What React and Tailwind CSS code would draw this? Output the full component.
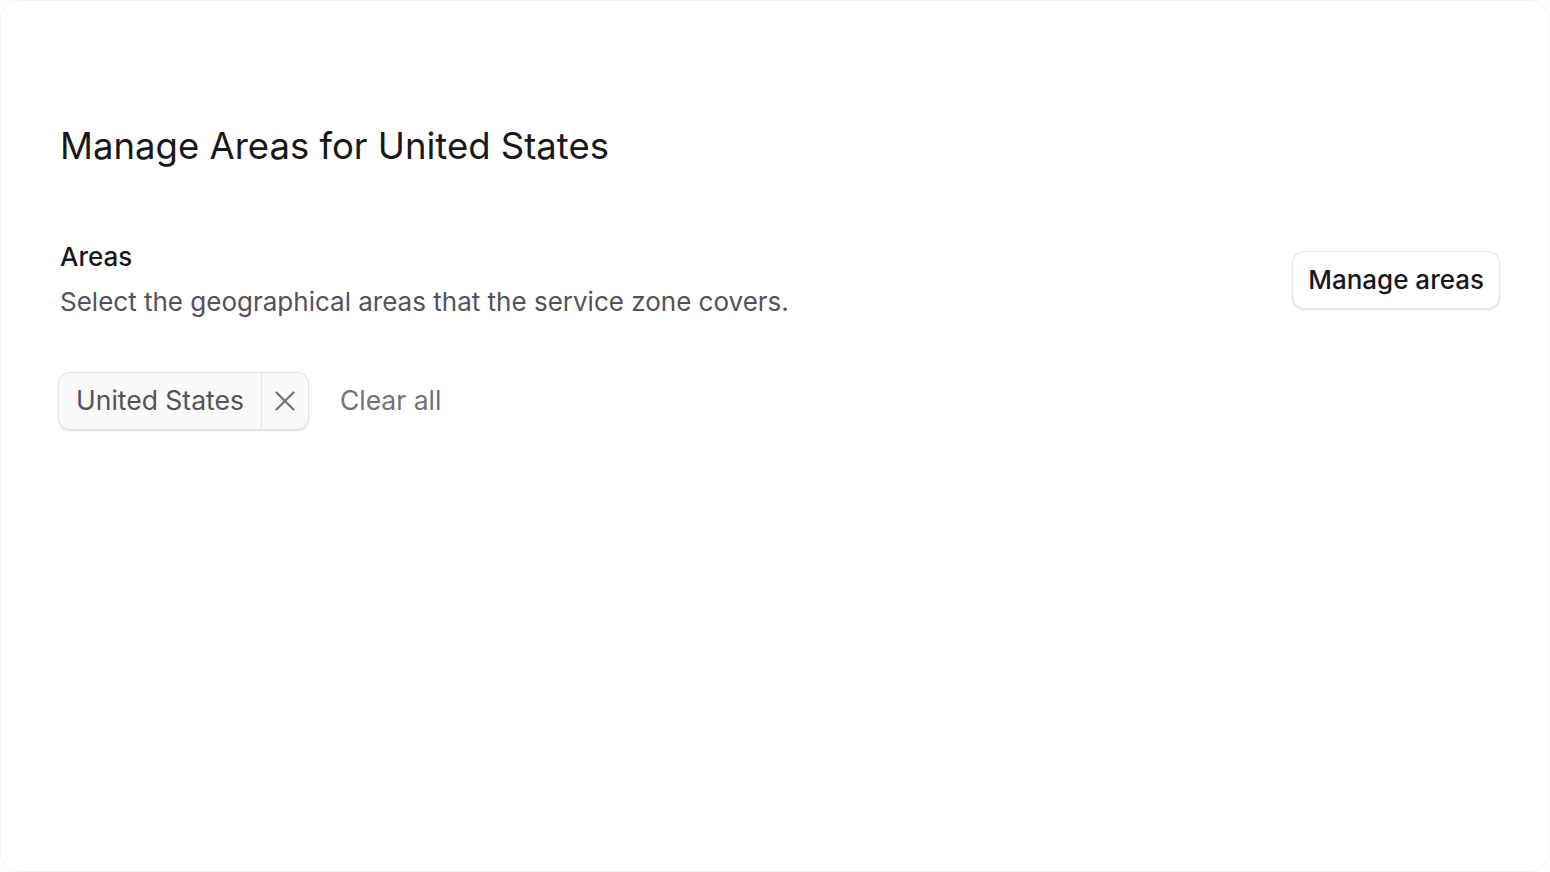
const App = () => {
  return (
    <div className="h-[872px] w-[1550px] bg-white font-['Inter',sans-serif]">
      <div className="h-full w-full rounded-[20px] border border-[#f4f4f5] pl-[59px] pr-[49px] pt-[124px]">
        <h1 className="text-[36.5px] font-normal leading-[42px] text-[#18181b]">
          Manage Areas for United States
        </h1>

        <div className="mt-[72px] flex items-center justify-between">
          <div>
            <h2 className="text-[26px] font-medium leading-[36px] text-[#18181b]">Areas</h2>
            <p className="mt-[9px] text-[26px] leading-[36px] text-[#52525b]">
              Select the geographical areas that the service zone covers.
            </p>
          </div>
          <button className="h-[58px] rounded-[12px] border border-[#e4e4e7] bg-white px-[15px] text-[26px] font-medium text-[#18181b] shadow-[0_1px_2px_rgba(0,0,0,0.12)]">
            Manage areas
          </button>
        </div>

        <div className="-ml-[2px] mt-[52px] flex items-center gap-[31px]">
          <div className="flex h-[58px] items-stretch overflow-hidden rounded-[12px] border border-[#e4e4e7] bg-[#fafafa] shadow-[0_1px_2px_rgba(0,0,0,0.12)]">
            <span className="flex items-center px-[17px] text-[26.5px] text-[#52525b]">United States</span>
            <span className="flex w-[47px] items-center justify-center border-l border-[#e4e4e7]">
              <svg viewBox="0 0 20 20" className="h-[20px] w-[20px]" fill="none" stroke="#71717a" strokeWidth="2.2" strokeLinecap="round">
                <path d="M1.5 1.5 18.5 18.5M18.5 1.5 1.5 18.5" />
              </svg>
            </span>
          </div>
          <span className="text-[26.5px] text-[#71717a]">Clear all</span>
        </div>
      </div>
    </div>
  )
}

export default App
